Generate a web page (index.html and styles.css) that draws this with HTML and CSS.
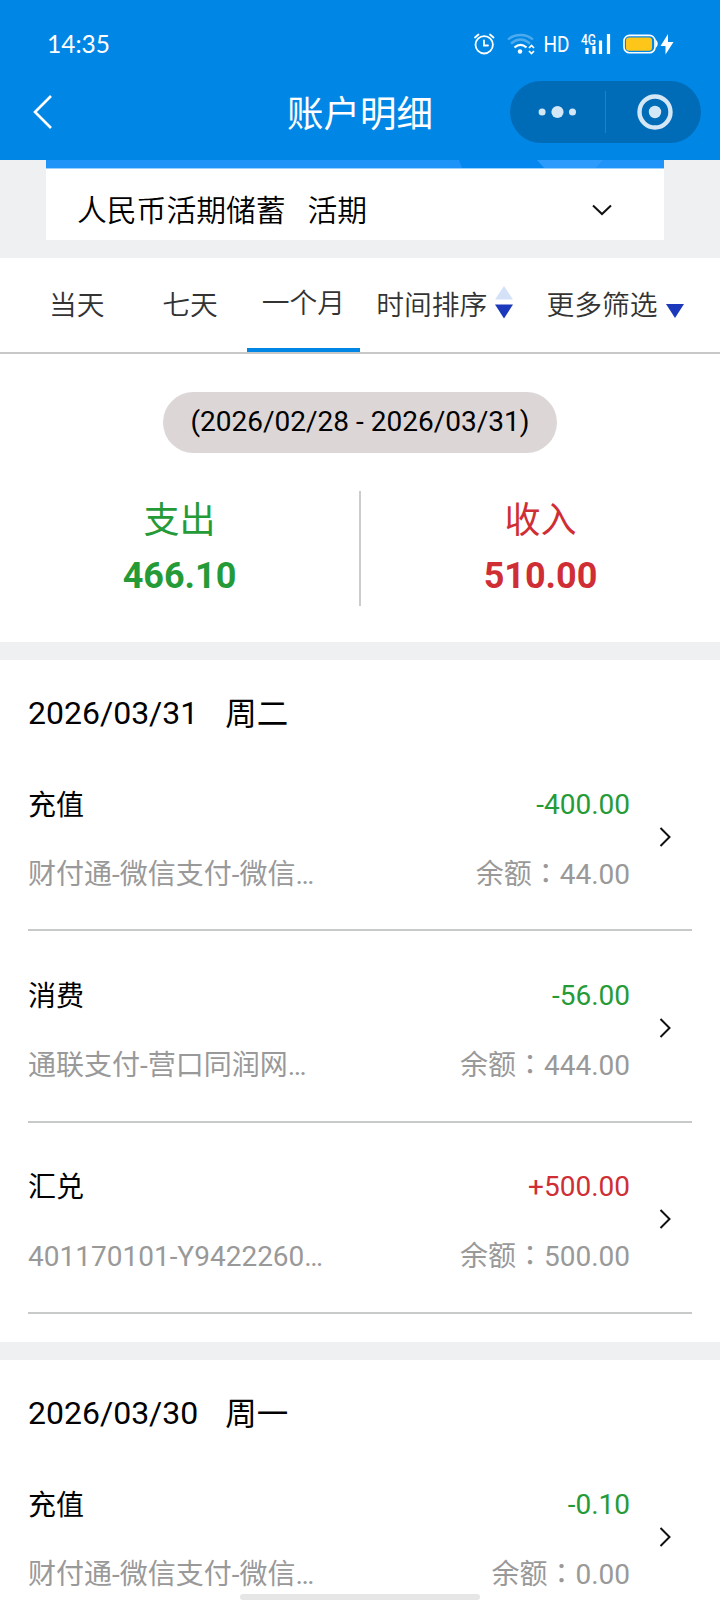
FILE: index.html
```html
<!DOCTYPE html>
<html lang="zh-CN">
<head>
  <meta charset="UTF-8">
  <title>账户明细</title>
  <link rel="stylesheet" href="styles.css">
</head>
<body>
  <header class="header">
    <div class="status-bar">
      <span class="clock">14:35</span>
      <svg class="status-icons" width="204" height="34" viewBox="0 0 204 34">
        <!-- alarm -->
        <g fill="none" stroke="#fff" stroke-width="1.8" stroke-linecap="round">
          <circle cx="14.2" cy="14.8" r="8.7"/>
          <path d="M14 10.500v5h4M5 7.500l3.500-3M20 4.500l3.500 3"/>
        </g>
        <!-- wifi -->
        <g fill="none" stroke="#fff" stroke-width="2.300">
          <path d="M38 9.500c7-6 18-6 25 0" opacity=".3"/>
          <path d="M41 13.500c6-5 13-5 19 0" opacity=".3"/>
          <path d="M44.500 17.500c4-3.500 8-3.500 12 0"/>
        </g>
        <circle cx="50" cy="21.500" r="2.200" fill="#fff"/>
        <path d="M59 18l2.500-2.500L64 18M59 21l2.500 2.500L64 21" fill="none" stroke="#fff" stroke-width="1.700"/>
        <text x="73.500" y="22" class="label-hd" textLength="26" lengthAdjust="spacingAndGlyphs">HD</text>
        <text x="111" y="14.500" class="label-4g" textLength="15" lengthAdjust="spacingAndGlyphs">4G</text>
        <path d="M117 18v6M124 16v8M130.500 10.500V24M138.500 4V24" stroke="#fff" stroke-width="3.200"/>
        <!-- battery -->
        <rect x="154" y="5.400" width="31" height="17.400" rx="5.500" fill="none" stroke="#fff" stroke-width="1.600"/>
        <rect x="156" y="7.500" width="26" height="13.200" rx="3" fill="#ffc61a"/>
        <path d="M185.500 9.500c3 2.500 3 6 0 8.500z" fill="#fff"/>
        <path d="M198 4l-7.500 12h5v8.500L203.500 12h-5.500z" fill="#fff"/>
      </svg>
    </div>
    <div class="nav-bar">
      <svg class="back" width="20" height="34" viewBox="0 0 20 34">
        <path d="M18 1L2 17l16 16" fill="none" stroke="#fff" stroke-width="2.600"/>
      </svg>
      <h1>账户明细</h1>
      <div class="capsule">
        <svg width="38" height="14" viewBox="0 0 38 14" fill="#d3e7f7">
          <circle cx="4.100" cy="7" r="3.500"/>
          <circle cx="19.500" cy="7" r="6.100"/>
          <circle cx="34.500" cy="7" r="3.500"/>
        </svg>
        <span class="capsule-line"></span>
        <svg width="36" height="36" viewBox="0 0 36 36">
          <circle cx="18" cy="18" r="15.500" fill="none" stroke="#d3e7f7" stroke-width="4.400"/>
          <circle cx="18" cy="18" r="6.200" fill="#d3e7f7"/>
        </svg>
      </div>
    </div>
  </header>

  <section class="account">
    <svg class="account-strip" width="618" height="9" viewBox="0 0 618 9">
      <path d="M0 0h618v9H0z" fill="#1e93f8"/>
      <path d="M413 0h78l7 8h-82z" fill="#0587f0"/>
      <path d="M491 0h66l-7 8h-51z" fill="#2c9bfb"/>
      <path d="M0 8h618v1H0z" fill="#9ad0fc"/>
    </svg>
    <div class="account-select">
      <span>人民币活期储蓄</span>
      <span>活期</span>
      <svg width="20" height="12" viewBox="0 0 20 12">
        <path d="M1 1.500l9 8.500 9-8.500" fill="none" stroke="#111" stroke-width="2"/>
      </svg>
    </div>
  </section>

  <nav class="tabs">
    <span class="tab">当天</span>
    <span class="tab">七天</span>
    <span class="tab active">一个月</span>
    <span class="sort">时间排序
      <svg width="18" height="34" viewBox="0 0 18 34">
        <path d="M9 0l9 13.500H0z" fill="#d5e1f7"/>
        <path d="M0 18.500h18L9 32.500z" fill="#1c39bb"/>
      </svg>
    </span>
    <span class="filter">更多筛选
      <svg width="18" height="14" viewBox="0 0 18 14">
        <path d="M0 0h18L9 14z" fill="#1c39bb"/>
      </svg>
    </span>
  </nav>

  <section class="summary">
    <div class="range">(2026/02/28 - 2026/03/31)</div>
    <div class="totals">
      <div class="total out"><span>支出</span><b>466.10</b></div>
      <div class="total in"><span>收入</span><b>510.00</b></div>
    </div>
  </section>

  <section class="day">
    <h2><span>2026/03/31</span><span class="week">周二</span></h2>
    <div class="record">
      <div class="info">
        <p><span>充值</span><span class="out">-400.00</span></p>
        <p class="sub"><span>财付通-微信支付-微信…</span><span>余额<i lang="zh-TW">：</i>44.00</span></p>
      </div>
      <svg class="arrow" width="12" height="20" viewBox="0 0 12 20"><path d="M1.500 1l9 9-9 9"/></svg>
    </div>
    <div class="record">
      <div class="info">
        <p><span>消费</span><span class="out">-56.00</span></p>
        <p class="sub"><span>通联支付-营口同润网…</span><span>余额<i lang="zh-TW">：</i>444.00</span></p>
      </div>
      <svg class="arrow" width="12" height="20" viewBox="0 0 12 20"><path d="M1.500 1l9 9-9 9"/></svg>
    </div>
    <div class="record">
      <div class="info">
        <p><span>汇兑</span><span class="in">+500.00</span></p>
        <p class="sub"><span>401170101-Y9422260…</span><span>余额<i lang="zh-TW">：</i>500.00</span></p>
      </div>
      <svg class="arrow" width="12" height="20" viewBox="0 0 12 20"><path d="M1.500 1l9 9-9 9"/></svg>
    </div>
  </section>

  <section class="day">
    <h2><span>2026/03/30</span><span class="week">周一</span></h2>
    <div class="record">
      <div class="info">
        <p><span>充值</span><span class="out">-0.10</span></p>
        <p class="sub"><span>财付通-微信支付-微信…</span><span>余额<i lang="zh-TW">：</i>0.00</span></p>
      </div>
      <svg class="arrow" width="12" height="20" viewBox="0 0 12 20"><path d="M1.500 1l9 9-9 9"/></svg>
    </div>
  </section>

  <div class="home-bar"></div>
</body>
</html>
```
FILE: styles.css
```css
:root {
  --blue: #0087e6;
  --gray-bg: #eff0f2;
  --line: #c8caca;
  --green: #259b38;
  --red: #cf2e34;
}
* {
  box-sizing: border-box;
}
body {
  margin: 0;
  height: 1600px;
  overflow: hidden;
  background-color: var(--gray-bg);
  color: #000;
  font-family: Roboto, "Noto Sans CJK SC", sans-serif;
  font-size: 28px;
}
svg {
  display: block;
  flex: none;
}
h1, h2, p {
  margin: 0;
  font-weight: normal;
}
.header {
  height: 160px;
  background-color: var(--blue);
  color: #fff;
}
.status-bar {
  display: flex;
  justify-content: space-between;
  height: 80px;
  padding: 30px 46px 0 47px;
}
.clock {
  font-family: Lato, sans-serif;
  font-size: 24.5px;
  line-height: 27px;
}
.label-hd {
  font-size: 22.5px;
  fill: #fff;
}
.label-4g {
  font-size: 14px;
  font-weight: 500;
  fill: #fff;
}
.nav-bar {
  display: grid;
  grid-template-columns: 1fr auto 1fr;
  align-items: center;
  height: 64px;
  padding: 0 19px 0 33px;
}
.nav-bar h1 {
  padding: 6px 14px 0 0;
  font-size: 36.5px;
  line-height: 40px;
}
.capsule {
  justify-self: end;
  display: flex;
  align-items: center;
  width: 191px;
  height: 62px;
  padding: 0 28px;
  border-radius: 31px;
  background-color: #006cb7;
}
.capsule-line {
  width: 1px;
  height: 42px;
  margin: 0 31px 0 29px;
  background-color: #2380c4;
}
.account {
  height: 98px;
  padding: 0 56px 0 46px;
}
.account-select {
  display: flex;
  align-items: center;
  gap: 22px;
  height: 71px;
  padding: 0 52px 0 31px;
  background-color: #fff;
  font-size: 29.8px;
  font-weight: 350;
}
.account-select span {
  padding-top: 6px;
}
.account-select svg {
  margin: 11px 0 0 auto;
}
.tabs {
  display: flex;
  height: 96px;
  padding-left: 20px;
  border-bottom: 2px solid #c8c8c8;
  background-color: #fff;
  color: #333;
  font-size: 27.8px;
  font-weight: 350;
  line-height: 95px;
}
.tab {
  width: 113.4px;
  text-align: center;
}
.tab.active {
  border-bottom: 4px solid var(--blue);
  line-height: 91px;
}
.sort, .filter {
  display: flex;
  gap: 8px;
  margin-left: 16px;
}
.sort svg {
  margin-top: 28px;
}
.filter {
  margin-left: 33px;
}
.filter svg {
  margin-top: 46px;
}
.summary {
  height: 288px;
  margin-bottom: 18px;
  padding-top: 38px;
  background-color: #fff;
}
.range {
  width: 394px;
  height: 61px;
  margin: 0 auto 38px;
  border-radius: 31px;
  background-color: #dcd6d7;
  line-height: 60px;
  text-align: center;
}
.totals {
  display: flex;
}
.total {
  flex: 1;
  height: 115px;
  font-size: 36px;
  text-align: center;
}
.total + .total {
  border-left: 2px solid #ccc;
}
.total span {
  display: block;
  line-height: 61px;
}
.total b {
  display: block;
  line-height: 48px;
}
.out {
  color: var(--green);
}
.in {
  color: var(--red);
}
.day {
  margin-bottom: 18px;
  padding: 0 28px 28px;
  background-color: #fff;
}
.day h2 {
  display: flex;
  gap: 27px;
  height: 80px;
  font-size: 32px;
  line-height: 106px;
}
.day .week {
  font-size: 31.5px;
  line-height: 109px;
}
.record {
  display: flex;
  align-items: center;
  height: 191.3px;
  border-bottom: 2px solid var(--line);
}
.info {
  flex: 1;
  padding-top: 10px;
}
.info p {
  display: flex;
  justify-content: space-between;
  line-height: 69px;
}
.info .out, .info .in {
  line-height: 67px;
}
.sub {
  color: #999;
}
.sub i {
  font-family: "Noto Sans CJK TC", sans-serif;
  font-style: normal;
  line-height: 0;
}
.arrow {
  margin: 4px 21px 0 29px;
  fill: none;
  stroke: #111;
  stroke-width: 2;
}
.home-bar {
  position: absolute;
  left: 240px;
  top: 1594px;
  width: 240px;
  height: 6px;
  border-radius: 3px;
  background-color: #e6e6e6;
}
```
